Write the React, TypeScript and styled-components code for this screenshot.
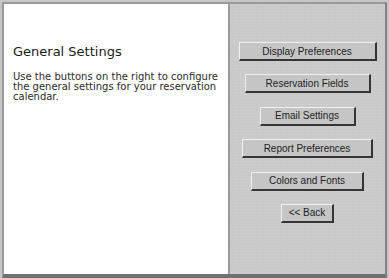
import React from 'react';
import styled, { createGlobalStyle } from 'styled-components';

const GlobalStyle = createGlobalStyle`
  body {
    margin: 0;
    background: #c6c6c6;
  }
`;

const Frame = styled.div`
  width: 389px;
  height: 278px;
  box-sizing: border-box;
  padding: 2px 2px 0 2px;
  background: #c6c6c6;
`;

const Inner = styled.div`
  display: flex;
  height: 100%;
  box-sizing: border-box;
  border-top: 2px solid #9a9a9a;
  border-left: 2px solid #9a9a9a;
  border-right: 2px solid #808080;
  border-bottom: 4px solid #707070;
`;

const InfoPanel = styled.div`
  width: 226px;
  background: #ffffff;
  border-right: 2px solid #9a9a9a;
  padding: 40px 0 0 9px;
  box-sizing: border-box;
  font-family: "DejaVu Sans", Verdana, sans-serif;
  color: #1a1a1a;
`;

const Title = styled.h1`
  margin: 0 0 12px 0;
  font-size: 13px;
  line-height: 16px;
  font-weight: normal;
`;

const Description = styled.p`
  margin: 0;
  width: 212px;
  font-size: 10px;
  line-height: 10px;
  color: #2a2a2a;
`;

const ButtonPanel = styled.div`
  flex: 1;
  display: flex;
  flex-direction: column;
  align-items: center;
  gap: 13.4px;
  padding-top: 38px;
  background-color: #cacaca;
  background-image: radial-gradient(#d1d1d1 0.5px, transparent 0.7px);
  background-size: 3px 3px;
`;

const MenuButton = styled.button<{ $w: number }>`
  width: ${(p) => p.$w}px;
  height: 19px;
  padding: 0;
  box-sizing: border-box;
  background: #c5c5c5;
  border-top: 1px solid #f0f0f0;
  border-left: 1px solid #f0f0f0;
  border-right: 2px solid #353535;
  border-bottom: 2px solid #353535;
  font-family: "Liberation Sans", Arial, sans-serif;
  font-size: 10px;
  color: #1e1e1e;
  cursor: pointer;
`;

const buttons = [
  { label: 'Display Preferences', w: 138 },
  { label: 'Reservation Fields', w: 126 },
  { label: 'Email Settings', w: 96 },
  { label: 'Report Preferences', w: 131 },
  { label: 'Colors and Fonts', w: 113 },
  { label: '<< Back', w: 53 },
];

export default function App() {
  return (
    <>
      <GlobalStyle />
      <Frame>
        <Inner>
          <InfoPanel>
            <Title>General Settings</Title>
            <Description>
              Use the buttons on the right to configure the general settings for your reservation calendar.
            </Description>
          </InfoPanel>
          <ButtonPanel>
            {buttons.map((b) => (
              <MenuButton key={b.label} $w={b.w}>
                {b.label}
              </MenuButton>
            ))}
          </ButtonPanel>
        </Inner>
      </Frame>
    </>
  );
}
